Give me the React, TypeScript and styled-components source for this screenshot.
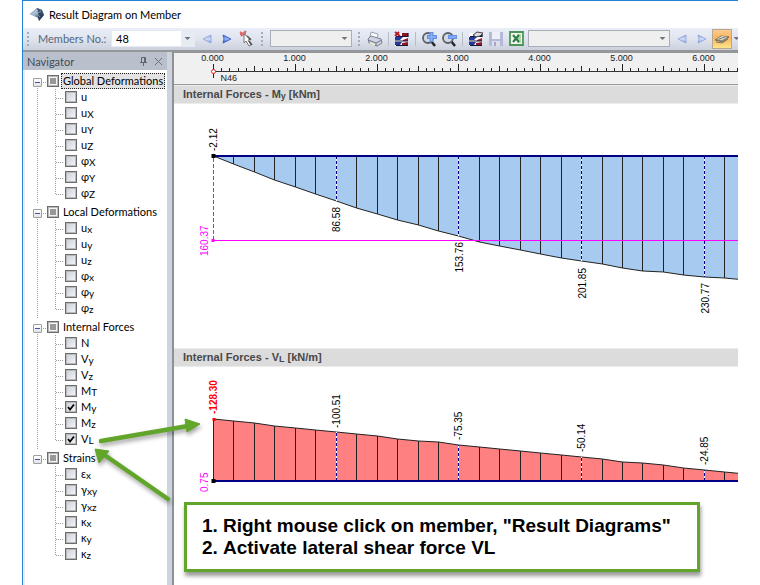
import React from "react";
import styled, { createGlobalStyle } from "styled-components";

const ui = 'Lato, "Noto Sans", sans-serif';
const arial = '"Liberation Sans", Arial, sans-serif';

const GlobalStyle = createGlobalStyle`
  * { box-sizing: border-box; }
  body { margin: 0; background: #fff; font-family: ${ui}; font-size: 11px; color: #000; }
  button, select { font: inherit; color: inherit; }
`;

const Window = styled.div`
  position: relative;
  display: flex;
  flex-direction: column;
  min-height: 100vh;
  margin: 0 22px;
  border-top: 1px solid #2383d6;
  border-left: 1px solid #2383d6;
  overflow: hidden;
`;

const TitleBar = styled.header`
  display: flex;
  align-items: center;
  gap: 5px;
  height: 27px;
  padding-left: 7px;
`;

const Title = styled.h1`
  margin: 0;
  font-size: 11px;
  font-weight: 400;
`;

const Toolbar = styled.div`
  display: flex;
  align-items: center;
  height: 24px;
  padding-bottom: 1px;
  background: linear-gradient(#e9eef8, #dfe4ee 50%, #cbd1dd);
  border-bottom: 2px solid #959699;
  overflow: hidden;
`;

const ToolGroup = styled.div`
  display: flex;
  flex: none;
  align-items: center;
`;

const Grip = styled.span`
  width: 2px;
  height: 14px;
  margin: 0 5px 0 4px;
  background: repeating-linear-gradient(#a3abba 0 2px, transparent 2px 4px);
`;

const Separator = styled.span`
  width: 1px;
  height: 14px;
  margin: 0 3px;
  background: #b6bdc9;
`;

const FieldLabel = styled.label`
  width: 75px;
  padding: 0 6px 0 4px;
  color: #56647c;
  white-space: nowrap;
`;

const Combo = styled.span<{ $width: number; $filled?: boolean }>`
  display: grid;
  align-items: center;
  width: ${(p) => p.$width}px;
  height: 17px;
  margin: 0 2px;
  border: 1px solid ${(p) => (p.$filled ? "#e4e9f2" : "#a9adb5")};
  background: ${(p) => (p.$filled ? "#fff" : "#efefef")};
  select, svg { grid-area: 1 / 1; }
  select {
    width: 100%;
    height: 15px;
    padding: 0 4px;
    border: 0;
    background: transparent;
    appearance: none;
  }
  svg {
    justify-self: end;
    pointer-events: none;
    background: ${(p) => (p.$filled ? "#e6ebf4" : "transparent")};
  }
`;

const ToolButton = styled.button<{ $active?: boolean }>`
  display: grid;
  place-items: center;
  flex: none;
  width: 20px;
  height: 20px;
  padding: 0;
  border: ${(p) => (p.$active ? "1px solid #b9a78b" : "0")};
  background: ${(p) => (p.$active ? "linear-gradient(#fbcb93, #fdb45c 45%, #ffe58c)" : "transparent")};
`;

const NarrowButton = styled(ToolButton)`
  width: 9px;
`;

const Workspace = styled.div`
  display: flex;
  flex: 1;
`;

const Navigator = styled.aside`
  display: flex;
  flex-direction: column;
  flex: none;
  width: 144px;
  border-left: 2px solid #e9eef6;
`;

const NavHeader = styled.div`
  display: flex;
  align-items: center;
  height: 18px;
  padding-right: 1px;
  margin-left: -2px;
  padding-left: 4px;
  background: #b9c0cb;
  color: #414a57;
`;

const NavTitle = styled.h2`
  flex: 1;
  margin: 0;
  font-size: 11px;
  font-weight: 400;
`;

const HeaderButton = styled.button`
  display: grid;
  place-items: center;
  width: 15px;
  height: 16px;
  padding: 0;
  border: 0;
  background: none;
`;

const Tree = styled.ul`
  margin: 0;
  padding: 2px 0 0 12px;
  list-style: none;
`;

const Branch = styled.li`
  padding-bottom: 2px;
  background: repeating-linear-gradient(#a0a0a0 0 1px, transparent 1px 2px) 0 8px / 1px 100% no-repeat;
  &:last-child { background-size: 1px 0; }
`;

const BranchRow = styled.div`
  display: flex;
  align-items: center;
  height: 17px;
  margin-left: -4px;
`;

const Expander = styled.button`
  display: grid;
  place-items: center;
  flex: none;
  width: 9px;
  height: 9px;
  margin-top: 4px;
  padding: 0;
  border: 1px solid #9b9ea5;
  border-radius: 1px;
  background: linear-gradient(#fff, #e3e3e3);
  &::after { content: ""; width: 5px; height: 1px; background: #3a57a8; }
`;

const Stub = styled.span`
  flex: none;
  width: 5px;
  height: 1px;
  margin-top: 4px;
  background: repeating-linear-gradient(90deg, transparent 0 1px, #a0a0a0 1px 2px);
`;

const Leaves = styled.ul`
  margin: 0;
  padding: 0 0 0 18px;
  list-style: none;
`;

const LeafRow = styled.li`
  display: flex;
  align-items: center;
  height: 16px;
`;

const Item = styled.label`
  display: flex;
  align-items: center;
`;

const Tick = styled.span`
  display: grid;
  place-items: center;
  width: 12px;
  height: 12px;
  input, svg { grid-area: 1 / 1; }
  svg { display: none; pointer-events: none; }
  input:checked + svg { display: block; }
`;

const Box = styled.input<{ $mixed?: boolean }>`
  flex: none;
  width: 12px;
  height: 12px;
  margin: 0;
  appearance: none;
  border: 1px solid #6c6c6c;
  outline: 1px solid #b9b9b9;
  outline-offset: -2px;
  background: ${(p) =>
    p.$mixed
      ? "linear-gradient(#999, #999) center / 6px 6px no-repeat, #f4f4f4"
      : "linear-gradient(135deg, #c9d0da, #f6f7f9)"};
`;

const Caption = styled.span<{ $focused?: boolean }>`
  height: 16px;
  margin-left: 2px;
  padding: 0 1px;
  border: 1px dotted ${(p) => (p.$focused ? "#222" : "transparent")};
  background: ${(p) => (p.$focused ? "#e3e3e3" : "transparent")};
  line-height: 14px;
  white-space: nowrap;
`;

const Index = styled.small`
  font-size: 10px;
  vertical-align: -1px;
`;

const Splitter = styled.div`
  flex: none;
  width: 7px;
  background: #ced4df;
  border-right: 2px solid #8e9094;
`;

const Results = styled.main`
  display: flex;
  flex: 1;
  flex-direction: column;
  min-width: 0;
  border-top: 1px solid #959699;
`;

const Drawing = styled.svg<{ $height: number }>`
  display: block;
  width: 100%;
  height: ${(p) => p.$height}px;
  font-family: ${arial};
  font-size: 10px;
`;

const Ruler = styled(Drawing)`
  background: #f0f0f0;
  border-bottom: 1px solid #999;
  font-size: 9px;
`;

const SectionTitle = styled.h2`
  height: 19px;
  margin: 0;
  padding-left: 9px;
  border-top: 1px solid #ececec;
  border-bottom: 1px solid #ececec;
  background: #dcdcdc;
  color: #484848;
  font: bold 11px/17px ${arial};
`;

const SmallCap = styled.small`
  font-size: 9px;
  vertical-align: -1px;
`;

const Note = styled.ol`
  position: absolute;
  top: 501px;
  left: 161px;
  width: 516px;
  margin: 0;
  padding: 10px 0 10px 36px;
  border: 3px solid #62a52b;
  background: #fff;
  box-shadow: 1px 4px 4px rgba(0, 0, 0, 0.4);
  font: bold 19px/22px ${arial};
  white-space: nowrap;
`;

const Arrows = styled.svg`
  position: absolute;
  top: 409px;
  left: 67px;
  pointer-events: none;
  filter: drop-shadow(1px 3px 2px rgba(0, 0, 0, 0.35));
`;

const DownArrow = ({ width = 13 }: { width?: number }) => (
  <svg width={width} height="15" viewBox={`0 0 ${width} 15`}>
    <path d={`M${width / 2 - 3} 6h6l-3 3z`} fill="#70757e" />
  </svg>
);

const Triangle = ({ left, pale }: { left?: boolean; pale?: boolean }) => (
  <svg width="10" height="10" viewBox="0 0 10 10">
    <defs>
      <linearGradient id={pale ? "tp" : "ts"} x1="0" y1="0" x2="0" y2="1">
        <stop offset="0" stopColor={pale ? "#8fa5dc" : "#3e63cf"} />
        <stop offset=".5" stopColor={pale ? "#d3e0fb" : "#9dbcf5"} />
        <stop offset="1" stopColor={pale ? "#8296d3" : "#2440b0"} />
      </linearGradient>
    </defs>
    <path
      d={left ? "M9 1v8L1 5z" : "M1 1l8 4-8 4 1-4z"}
      fill={`url(#${pale ? "tp" : "ts"})`}
      stroke={pale ? "#8da0d6" : "#2f4fc0"}
      strokeWidth=".8"
    />
  </svg>
);

const LogoIcon = () => (
  <svg width="14" height="13" viewBox="0 0 14 13">
    <path d="M0 6L7 0l5 2 2 5-5 6-1-3z" fill="#6d859f" />
    <path d="M0 6l7-6 1 4-4 4z" fill="#9fb4ca" />
    <path d="M7 0l5 2 2 5-6-3z" fill="#3b5370" />
    <path d="M8 4l6 3-5 6-1-4z" fill="#2c415d" />
    <path d="M2 6l6-4M4 8l7-5M5 3l5 6" stroke="#c4d3e2" strokeWidth=".6" />
  </svg>
);

const PickIcon = () => (
  <svg width="16" height="18" viewBox="0 0 16 18">
    <path d="M1 2l6 4M7 1L2 6M1 4l6-1" stroke="#dd6a6a" strokeWidth="2" />
    <path d="M5 4v9l2-2 3 5 2-1-3-5 3-1z" fill="#fff" stroke="#777" />
    <path d="M8 6l4 4M10 11l3 4" stroke="#555" strokeWidth="1.5" />
  </svg>
);

const PrinterIcon = () => (
  <svg width="16" height="16" viewBox="0 0 16 16">
    <path d="M4 1l7 2-1 5-7-2z" fill="#fff" stroke="#9aa0b4" />
    <path d="M1 8l3-3 10 3 1 4-5 3-8-3z" fill="#cfd3e2" stroke="#7a8096" />
    <path d="M1 9l8 3 6-3M9 12v3" stroke="#70768c" fill="none" />
    <path d="M3 12l5 2" stroke="#f3efc4" strokeWidth="1.5" />
  </svg>
);

const DiagramIcon = ({ edit }: { edit?: boolean }) => (
  <svg width="16" height="16" viewBox="0 0 16 16">
    <path d="M1 2h13v13H1z" fill="#fff" />
    <path d="M8 2h6v4l-6-1z" fill="#8e1524" />
    <path d="M1 6h8l-3 3H1z" fill="#2338a0" />
    <path d="M9 9l5-2v3H9z" fill="#9c1a2a" />
    <path d="M1 11h7l-2 3H1z" fill="#2338a0" />
    <path d="M8 12l6-1v3H8z" fill="#8e1524" />
    <path d="M2 5.500h12M1 10h13M2 14.500h12M14 2v4" stroke="#15153a" strokeWidth="1.2" />
    {edit ? (
      <path d="M5 4l4-3 6 1-3 3-4 1z" fill="#ddd" stroke="#444" />
    ) : (
      <path d="M1 1l5 4M5 1L1 5" stroke="#b51824" strokeWidth="1.8" />
    )}
  </svg>
);

const ZoomIcon = ({ plus }: { plus?: boolean }) => (
  <svg width="17" height="16" viewBox="0 0 17 16">
    <path d="M10 10l4 5" stroke="#26282c" strokeWidth="2.6" />
    <circle cx="7" cy="7" r="5" fill="#d3d9e4" stroke="#5d6066" strokeWidth="1.8" />
    <path d={plus ? "M10.500 1v10M6 6h10" : "M7 6h9"} stroke="#6590e6" strokeWidth="4" />
    <path d={plus ? "M10.500 2v8M7 6h8" : "M8 6h7"} stroke="#8bb0f6" strokeWidth="1.6" />
  </svg>
);

const SaveIcon = () => (
  <svg width="14" height="14" viewBox="0 0 14 14">
    <path d="M0 0h14v14H1l-1-1z" fill="#b3bad8" />
    <path d="M3 0h8v7H3z" fill="#eef0f7" />
    <path d="M3 9h8v5H3z" fill="#dde0ea" />
    <path d="M5 10h2v4H5z" fill="#a0a7c5" />
  </svg>
);

const SheetIcon = () => (
  <svg width="15" height="15" viewBox="0 0 15 15">
    <path d="M1 1h13v13H1z" fill="#f0f6ee" stroke="#4f9457" strokeWidth="1.8" />
    <path d="M8 3h4v9H8z" fill="#b5d6b4" />
    <path d="M4 4l6 7M10 4l-6 7" stroke="#2c7a40" strokeWidth="2" />
  </svg>
);

const LayersIcon = () => (
  <svg width="16" height="12" viewBox="0 0 16 12">
    <path d="M1 7l6-4 8 1-6 5z" fill="#96907f" stroke="#77705f" />
    <path d="M3 6l5-3 5 1-5 3z" fill="#e6e3d8" />
    <path d="M5 6l6-2M2 9l6 1 6-4" stroke="#7d7766" fill="none" />
  </svg>
);

const PinIcon = () => (
  <svg width="9" height="9" viewBox="0 0 9 9" stroke="#5d6673" fill="none">
    <path d="M2.500 5.500v-5h4v5M5.500 0v5M1 5.500h7M4.500 6v3" />
  </svg>
);

const CloseIcon = () => (
  <svg width="9" height="9" viewBox="0 0 9 9" stroke="#6a727e">
    <path d="M1 1l7 7M8 1L1 8" />
  </svg>
);

const LeafGuide = ({ last }: { last: boolean }) => (
  <svg width="10" height="16" viewBox="0 0 10 16" stroke="#9a9a9a" strokeDasharray="1 1">
    <path d={last ? "M.5 0v10" : "M.5 0v16"} />
    <path d="M1 9.500h7" />
  </svg>
);

type Leaf = { text: string; index?: string; checked?: boolean };
const branches: { name: string; leaves: Leaf[] }[] = [
  {
    name: "Global Deformations",
    leaves: [
      { text: "u" },
      { text: "u", index: "X" },
      { text: "u", index: "Y" },
      { text: "u", index: "Z" },
      { text: "φ", index: "X" },
      { text: "φ", index: "Y" },
      { text: "φ", index: "Z" },
    ],
  },
  {
    name: "Local Deformations",
    leaves: [
      { text: "u", index: "x" },
      { text: "u", index: "y" },
      { text: "u", index: "z" },
      { text: "φ", index: "x" },
      { text: "φ", index: "y" },
      { text: "φ", index: "z" },
    ],
  },
  {
    name: "Internal Forces",
    leaves: [
      { text: "N" },
      { text: "V", index: "y" },
      { text: "V", index: "z" },
      { text: "M", index: "T" },
      { text: "M", index: "y", checked: true },
      { text: "M", index: "z" },
      { text: "V", index: "L", checked: true },
    ],
  },
  {
    name: "Strains",
    leaves: [
      { text: "ε", index: "x" },
      { text: "γ", index: "xy" },
      { text: "γ", index: "xz" },
      { text: "κ", index: "x" },
      { text: "κ", index: "y" },
      { text: "κ", index: "z" },
    ],
  },
];

const ORIGIN = 39;
const METRE = 81.8;
const at = (m: number) => Math.round(ORIGIN + m * METRE) + 0.5;

const RulerScale = () => (
  <Ruler $height={32} role="img" aria-label="Length scale">
    <path d={`M${at(0)} 18.500H${at(8)}`} stroke="#333" />
    {Array.from({ length: 81 }, (_, i) => (
      <path
        key={i}
        d={`M${at(i / 10)} 18V${i % 10 === 0 ? 11 : i % 5 === 0 ? 13 : 15}`}
        stroke="#222"
      />
    ))}
    {Array.from({ length: 7 }, (_, i) => (
      <text key={i} x={at(i) - 1} y="8" textAnchor="middle" fill="#222">
        {i.toFixed(3)}
      </text>
    ))}
    <path d={`M${at(0)} 11v14`} stroke="#222" />
    <circle cx={at(0)} cy="18.5" r="2" fill="#fff" stroke="#f02020" />
    <text x={at(0) + 7} y="28" fill="#222">N46</text>
  </Ruler>
);

// Ordinates at every 0.25 m, in drawing units from the member axis.
const moment = [
  0, 8, 16, 24, 31, 38, 45, 52, 58, 64, 69, 75, 80, 86, 90, 94, 98, 102, 105, 108, 112, 115, 116,
  119, 121, 122, 124, 125, 126, 126, 126, 125, 124,
];
const shear = [
  62, 60, 58, 55, 53, 51, 49, 47, 45, 42, 40, 39, 36, 34, 32, 30, 28, 26, 24, 22, 19, 18, 16, 13, 11,
  9, 7, 5, 3, 1, 0, 0, 0,
];

const Diagram = ({ axis, values, sign, fill }: { axis: number; values: number[]; sign: number; fill: string }) => {
  const outline = values.map((v, i) => `${at(i / 4)} ${axis + sign * v}`).join("L");
  return (
    <>
      <path d={`M${at(0)} ${axis}L${outline}V${axis}z`} fill={fill} />
      <path d={`M${outline}`} fill="none" stroke="#222" />
      {values.map((v, i) => {
        const line = `M${at(i / 4)} ${axis}V${axis + sign * v}`;
        return i % 6 === 0 && i > 0 ? (
          <g key={i}>
            <path d={line} stroke="#fff" />
            <path d={line} stroke="#000090" strokeDasharray="3 2" />
          </g>
        ) : (
          <path key={i} d={line} stroke="#222" />
        );
      })}
      <path d={`M${at(0)} ${axis}H${at(values.length / 4 - 0.25)}`} stroke="#000084" strokeWidth="2" />
      <rect x={at(0) - 2} y={axis - 2} width="4" height="4" />
    </>
  );
};

const Upright = ({ x, y, end, ...rest }: { x: number; y: number; end?: boolean } & React.SVGProps<SVGTextElement>) => (
  <text transform={`translate(${x} ${y}) rotate(-90)`} textAnchor={end ? "end" : "start"} {...rest} />
);

const MomentChart = () => (
  <Drawing $height={244} role="img" aria-label="Internal Forces My">
    <Diagram axis={52} values={moment} sign={1} fill="#a6caf0" />
    <path d={`M${at(0)} 54v82`} fill="none" stroke="#ff00ff" strokeDasharray="4 2" />
    <path d={`M${at(0)} 136.500H${at(8)}`} fill="none" stroke="#ff00ff" />
    <rect x={at(0) - 2} y="135" width="3" height="3" fill="#ff00ff" />
    <Upright x={at(0) + 3} y={47}>-2.12</Upright>
    <Upright x={34} y={152} fill="#ff00ff">160.37</Upright>
    <Upright x={at(1.5) + 3} y={103} end>86.58</Upright>
    <Upright x={at(3) + 4} y={138} end>153.76</Upright>
    <Upright x={at(4.5) + 4} y={164} end>201.85</Upright>
    <Upright x={at(6) + 4} y={179} end>230.77</Upright>
  </Drawing>
);

const ShearChart = () => (
  <Drawing $height={200} role="img" aria-label="Internal Forces VL">
    <Diagram axis={114} values={shear} sign={-1} fill="#ff8080" />
    <rect x={at(0) - 1} y="51" width="3" height="3" fill="#f00" />
    <Upright x={at(0) + 3} y={47} fill="#f00" fontWeight="bold">-128.30</Upright>
    <Upright x={34} y={125} fill="#ff00ff">0.75</Upright>
    <Upright x={at(1.5) + 3} y={61}>-100.51</Upright>
    <Upright x={at(3) + 3} y={73}>-75.35</Upright>
    <Upright x={at(4.5) + 3} y={85}>-50.14</Upright>
    <Upright x={at(6) + 3} y={98}>-24.85</Upright>
  </Drawing>
);

export default function App() {
  return (
    <>
      <GlobalStyle />
      <Window>
        <TitleBar>
          <LogoIcon />
          <Title>Result Diagram on Member</Title>
        </TitleBar>
        <Toolbar role="toolbar" aria-label="Result diagram tools">
          <ToolGroup>
            <Grip />
            <FieldLabel htmlFor="member">Members No.:</FieldLabel>
            <Combo $width={84} $filled>
              <select id="member" defaultValue="48">
                <option>48</option>
              </select>
              <DownArrow />
            </Combo>
            <ToolButton aria-label="Previous member"><Triangle left pale /></ToolButton>
            <ToolButton aria-label="Next member"><Triangle /></ToolButton>
            <ToolButton aria-label="Pick member"><PickIcon /></ToolButton>
          </ToolGroup>
          <ToolGroup>
            <Grip />
            <Combo $width={82}>
              <select aria-label="Member set" />
              <DownArrow />
            </Combo>
          </ToolGroup>
          <ToolGroup>
            <Grip />
            <ToolButton aria-label="Print"><PrinterIcon /></ToolButton>
            <Separator />
            <ToolButton aria-label="Clear diagrams"><DiagramIcon /></ToolButton>
            <Separator />
            <ToolButton aria-label="Zoom in"><ZoomIcon plus /></ToolButton>
            <ToolButton aria-label="Zoom out"><ZoomIcon /></ToolButton>
            <Separator />
            <ToolButton aria-label="Edit diagrams"><DiagramIcon edit /></ToolButton>
            <ToolButton aria-label="Save"><SaveIcon /></ToolButton>
            <ToolButton aria-label="Export to spreadsheet"><SheetIcon /></ToolButton>
            <Combo $width={142}>
              <select aria-label="Load case" />
              <DownArrow />
            </Combo>
            <ToolButton aria-label="Previous load case"><Triangle left pale /></ToolButton>
            <ToolButton aria-label="Next load case"><Triangle pale /></ToolButton>
            <ToolButton $active aria-label="Layers"><LayersIcon /></ToolButton>
            <NarrowButton aria-label="Layer options"><DownArrow width={9} /></NarrowButton>
          </ToolGroup>
        </Toolbar>
        <Workspace>
          <Navigator>
            <NavHeader>
              <NavTitle>Navigator</NavTitle>
              <HeaderButton aria-label="Pin"><PinIcon /></HeaderButton>
              <HeaderButton aria-label="Close"><CloseIcon /></HeaderButton>
            </NavHeader>
            <Tree>
              {branches.map((branch, b) => (
                <Branch key={branch.name}>
                  <BranchRow>
                    <Expander aria-label={`Collapse ${branch.name}`} />
                    <Stub />
                    <Item>
                      <Box type="checkbox" $mixed aria-checked="mixed" />
                      <Caption $focused={b === 0}>{branch.name}</Caption>
                    </Item>
                  </BranchRow>
                  <Leaves>
                    {branch.leaves.map((leaf, i) => (
                      <LeafRow key={i}>
                        <LeafGuide last={i === branch.leaves.length - 1} />
                        <Item>
                          <Tick>
                            <Box type="checkbox" defaultChecked={leaf.checked} />
                            <svg width="8" height="8" viewBox="0 0 8 8">
                              <path d="M1 4l2 2.500L7 1.500" fill="none" stroke="#000" strokeWidth="1.8" />
                            </svg>
                          </Tick>
                          <Caption>
                            {leaf.text}
                            {leaf.index && <Index>{leaf.index}</Index>}
                          </Caption>
                        </Item>
                      </LeafRow>
                    ))}
                  </Leaves>
                </Branch>
              ))}
            </Tree>
          </Navigator>
          <Splitter />
          <Results>
            <RulerScale />
            <SectionTitle>
              Internal Forces - M<SmallCap>y</SmallCap> [kNm]
            </SectionTitle>
            <MomentChart />
            <SectionTitle>
              Internal Forces - V<SmallCap>L</SmallCap> [kN/m]
            </SectionTitle>
            <ShearChart />
          </Results>
        </Workspace>
        <Arrows width="120" height="100" viewBox="0 0 120 100">
          <g fill="#62a52b" stroke="#62a52b">
            <path d="M11 31L98 16" strokeWidth="4.500" strokeLinecap="round" />
            <path d="M110 14L95 9l2 13z" />
            <path d="M78 89L16 46" strokeWidth="4.500" strokeLinecap="round" />
            <path d="M5 39l14 2-10 12z" />
          </g>
        </Arrows>
        <Note>
          <li>Right mouse click on member, "Result Diagrams"</li>
          <li>Activate lateral shear force VL</li>
        </Note>
      </Window>
    </>
  );
}
